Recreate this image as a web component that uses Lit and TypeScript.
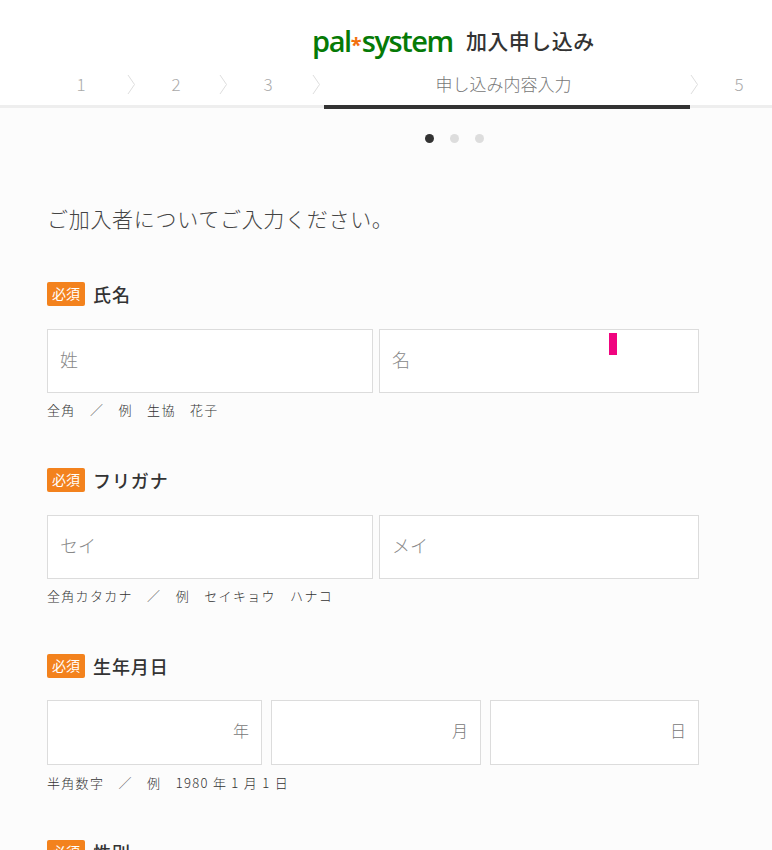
import { LitElement, html, css } from "lit";
import { customElement } from "lit/decorators.js";

const chevron = html`<svg class="chev" width="9" height="22" viewBox="0 0 9 22"><path d="M1 1 L7.5 10.5 L1 20" fill="none" stroke="#dedede" stroke-width="1"/></svg>`;

@customElement("app-root")
export class AppRoot extends LitElement {
  static styles = css`
    :host {
      display: block;
      height: 850px;
      overflow: hidden;
      background: #fcfcfc;
      color: #333;
      font-family: "Noto Sans CJK JP", "Noto Sans", sans-serif;
      font-weight: 300;
    }
    header { background: #fff; height: 105px; display: flex; flex-direction: column; }
    .brand { display: flex; align-items: center; height: 66px; padding: 14px 0 0 312px; box-sizing: border-box; gap: 12px; }
    .logo { font-family: "Open Sans", sans-serif; font-weight: 600; font-size: 29px; letter-spacing: -1.4px; color: #067a06; line-height: 1; white-space: nowrap; }
    .logo span { color: #f2700f; font-size: 20px; letter-spacing: 0; font-weight: 700; }
    .brand-title { font-size: 21px; font-weight: 500; line-height: 1; letter-spacing: 0.5px; color: #333; margin-left: 1px; }
    .tabs { display: flex; align-items: center; height: 39px; padding-left: 35px; }
    .tab { box-sizing: border-box; width: 92px; font-size: 17px; color: #aaa; line-height: 35px; height: 39px; flex: none; display: flex; justify-content: center; }
    .tab.t2 { width: 83px; padding-right: 3px; }
    .tab.t3 { width: 84px; padding-right: 4px; }
    .tab.t5 { width: 80px; }
    .spacer { width: 3px; flex: none; }
    .tab.active { width: 366px; color: #777; font-size: 17px; padding-right: 7px; }
    .chev { flex: none; margin-bottom: 2px; }
    .line { height: 3px; background: #eee; position: relative; }
    .progress { position: absolute; left: 324px; width: 366px; top: 0; height: 4px; background: #333; }
    .dots { display: flex; gap: 16px; padding: 26px 0 0 425px; }
    .dot { width: 9px; height: 9px; border-radius: 50%; background: #ddd; }
    .dot.on { background: #333; }
    .main { padding: 0 73px 0 47px; }
    h1 { font-size: 21px; font-weight: 300; margin: 60px 0 0 0; line-height: 30px; color: #444; letter-spacing: 0.7px; }
    h1 + section { margin-top: 49px; }
    .label { display: flex; align-items: center; gap: 8px; height: 24px; }
    .badge { width: 38px; height: 24px; background: #f3821d; color: #fff; border-radius: 2px; font-size: 14px; line-height: 23px; text-align: center; font-weight: 400; }
    .label b { font-size: 18px; font-weight: 500; letter-spacing: 0.9px; color: #333; line-height: 22px; margin-bottom: 1px; }
    .row { display: flex; gap: 6px; margin-top: 23px; }
    .row.tri { gap: 9px; margin-top: 22px; }
    .box { height: 64px; box-sizing: border-box; border: 1px solid #dcdcdc; background: #fff; display: flex; align-items: center; padding: 0 12px 4px; font-size: 18px; color: #888; position: relative; }
    .hint { font-size: 13px; letter-spacing: 1.3px; color: #333; margin-top: 8px; padding-bottom: 1px; line-height: 18px; white-space: pre; }
    .tri + .hint { margin-top: 9px; padding-bottom: 0; }
    .unit { justify-content: flex-end; font-size: 16px; color: #777; height: 65px; padding-bottom: 6px; }
    .marker { position: absolute; left: 229px; top: 3px; width: 8px; height: 22px; background: #f0047f; }
    section { margin-top: 48px; }
  `;

  render() {
    return html`
      <header>
        <div class="brand">
          <div class="logo">pal<span>*</span>system</div>
          <div class="brand-title">加入申し込み</div>
        </div>
        <div class="tabs">
          <div class="tab">1</div>${chevron}
          <div class="tab t2">2</div>${chevron}
          <div class="tab t3">3</div>${chevron}
          <div class="spacer"></div>
          <div class="tab active">申し込み内容入力</div>${chevron}
          <div class="tab t5">5</div>
        </div>
      </header>
      <div class="line"><div class="progress"></div></div>
      <div class="dots"><div class="dot on"></div><div class="dot"></div><div class="dot"></div></div>
      <div class="main">
        <h1>ご加入者についてご入力ください。</h1>
        <section>
          <div class="label"><span class="badge">必須</span><b>氏名</b></div>
          <div class="row">
            <div class="box" style="width:326px">姓</div>
            <div class="box" style="width:320px">名<div class="marker"></div></div>
          </div>
          <div class="hint">全角　／　例　生協　花子</div>
        </section>
        <section>
          <div class="label"><span class="badge">必須</span><b>フリガナ</b></div>
          <div class="row">
            <div class="box" style="width:326px">セイ</div>
            <div class="box" style="width:320px">メイ</div>
          </div>
          <div class="hint">全角カタカナ　／　例　セイキョウ　ハナコ</div>
        </section>
        <section>
          <div class="label"><span class="badge">必須</span><b>生年月日</b></div>
          <div class="row tri">
            <div class="box unit" style="width:215px">年</div>
            <div class="box unit" style="width:210px">月</div>
            <div class="box unit" style="width:209px">日</div>
          </div>
          <div class="hint">半角数字　／　例　1980 年 1 月 1 日</div>
        </section>
        <section>
          <div class="label"><span class="badge">必須</span><b>性別</b></div>
        </section>
      </div>
    `;
  }
}
